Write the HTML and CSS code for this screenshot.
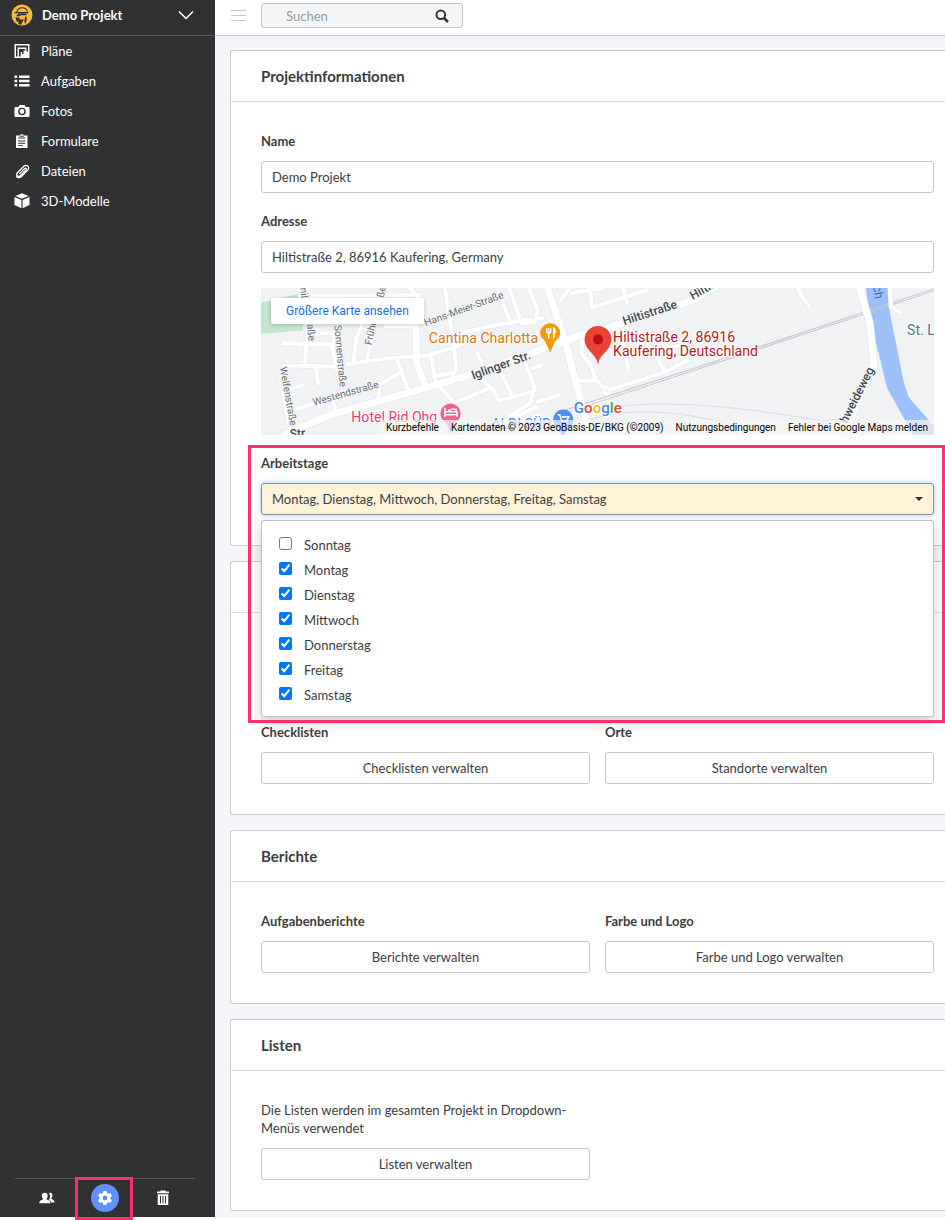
FILE: index.html
```html
<!DOCTYPE html>
<html lang="de">
<head>
<meta charset="utf-8">
<meta name="viewport" content="width=device-width, initial-scale=1">
<title>Demo Projekt – Einstellungen</title>
<link rel="stylesheet" href="styles.css">
</head>
<body>
<div class="app">
  <aside class="sidebar">
    <button class="project" type="button">
      <svg class="logo" viewBox="0 0 22 22" aria-hidden="true">
        <circle cx="11" cy="11" r="10.500" fill="#fbb93c"/>
        <path d="M5.800 8C6.500 5 8.500 3.800 11.400 3.800c3 0 4.600 1.800 5 4.200M3.500 8.600h13.800" fill="none" stroke="#303133" stroke-width="1.100"/>
        <path d="M7 9.500h8.500v1.800H9.500l-1 1H4.500L6.500 11zM4.500 13.500h4v2h4.500l-3 5.200-2.800-.7.5-2.500H5.500zM14.500 12l1.200 1.500v3l-1.600 3.500-.8-3z" fill="#303133"/>
      </svg>
      <span class="project-name">Demo Projekt</span>
      <svg class="chevron" viewBox="0 0 16 10" aria-hidden="true"><path d="M1 1.500l7 7 7-7" fill="none" stroke="#fff" stroke-width="1.500"/></svg>
    </button>
    <nav class="menu">
      <a href="#"><svg viewBox="0 0 16 16"><path fill-rule="evenodd" d="M0.500 1h15v14h-15zM2 2.500v11h1.500v-9h9v4h1.500v-6zM5 6v7.500h1.700V9H8v2h1.500V7.500h1.800V6z"/></svg>Pläne</a>
      <a href="#"><svg viewBox="0 0 16 16"><path d="M.5 2.500h2.700v2.400H.5zM5 2.500h10.500v2.400H5zM.5 6.800h2.700v2.400H.5zM5 6.800h10.500v2.400H5zM.5 11.100h2.700v2.400H.5zM5 11.100h10.500v2.400H5z"/></svg>Aufgaben</a>
      <a href="#"><svg viewBox="0 0 16 16"><path d="M5.500 2h5l1.200 2h2.800a1 1 0 0 1 1 1v8a1 1 0 0 1-1 1h-13a1 1 0 0 1-1-1V5a1 1 0 0 1 1-1h2.800z"/><circle cx="8" cy="8.500" r="3.100" fill="none" stroke="#303133" stroke-width="1.400"/></svg>Fotos</a>
      <a href="#"><svg viewBox="0 0 16 16"><path d="M2 2.500h3.500a2.500 2 0 0 1 4.600 0H13.500V15H2z"/><path d="M4.200 5h7M4.200 8h7M4.200 10.300h7M4.200 12.600h4.500M5.500 3.200h4.500" stroke="#303133"/></svg>Formulare</a>
      <a href="#"><svg viewBox="0 0 16 16"><path d="M5.300 10.900l5.300-5.300c1-1 2.300.4 1.400 1.400l-5.700 5.700c-2.200 2-4.900-.7-2.900-2.900l6.200-6.300c3.200-2.900 6.700.7 3.900 3.900L7.500 13.500c-2 1.800-4.500 1.400-5.300-.3" fill="none" stroke="#fff" stroke-width="1.300"/></svg>Dateien</a>
      <a href="#"><svg viewBox="0 0 16 16"><path d="M8 .3l6.600 2.600L8 5.700 1.400 2.900zM.5 4l6.900 3v8.300L.5 12zM15.500 4l-6.900 3v8.300l6.900-3.300z"/></svg>3D-Modelle</a>
    </nav>
    <div class="tools">
      <button type="button" aria-label="Benutzer"><svg viewBox="0 0 18 16"><path d="M11.200 2.500c2.500-1 4.300.8 3.900 3.200-.2 1.200-.7 1.700-1 2.200v1.200c1.500.9 3.100 1 3.400 3.900h-3.700c-.4-1.600-1.500-2-2.700-2.600 1.400-2 2-5 .1-7.900z"/><path d="M6.300 2c2.600 0 3.800 1.700 3.400 4.200-.2 1.100-.6 1.600-1 2.100v1.300c1.700.9 4 .9 4.200 4.400H.3c.2-3.500 2.300-3.500 4-4.400V8.300c-.4-.5-.8-1-1-2.100C2.900 3.700 3.900 2 6.300 2z"/></svg></button>
      <button type="button" class="active" aria-label="Einstellungen"><svg viewBox="0 0 16 16"><path fill-rule="evenodd" d="M6.500 1h3l.5 2 1.500.8 1.900-.6 1.500 2.600L13.400 7.200v1.600l1.500 1.400-1.500 2.600-1.900-.6-1.500.8-.5 2h-3l-.5-2-1.500-.8-1.900.6-1.500-2.600 1.500-1.400V7.200L1.100 5.800l1.500-2.600 1.900.6L6 3zM8 5.600a2.400 2.400 0 1 0 0 4.800 2.400 2.400 0 0 0 0-4.800z"/></svg></button>
      <button type="button" aria-label="Papierkorb"><svg viewBox="0 0 16 16"><path fill-rule="evenodd" d="M5.500 1.500V.5h5v1H14v1.800H2V1.500zM2.700 4.200h10.600V15H2.700zM5 6v7.500h1V6zm2.500 0v7.500h1V6zM10 6v7.500h1V6z"/></svg></button>
    </div>
  </aside>

  <div class="content">
    <header class="topbar">
      <button class="burger" type="button" aria-label="Menü"><svg viewBox="0 0 16 12"><path d="M0 .5h15M0 5.500h15M0 10.500h15" stroke="#c8c8c8"/></svg></button>
      <div class="search">
        <input type="search" placeholder="Suchen" aria-label="Suchen">
        <svg viewBox="0 0 14 14" aria-hidden="true"><circle cx="5.800" cy="5.800" r="4.300" fill="none" stroke="#333" stroke-width="2"/><path d="M9 9l4 4" stroke="#333" stroke-width="2.500"/></svg>
      </div>
    </header>

    <main class="cards">
      <section class="card">
        <h2>Projektinformationen</h2>
        <div class="card-body">
          <div class="field">
            <label for="name">Name</label>
            <input class="control" id="name" type="text" value="Demo Projekt">
          </div>
          <div class="field">
            <label for="address">Adresse</label>
            <input class="control" id="address" type="text" value="Hiltistraße 2, 86916 Kaufering, Germany">
            <div class="map">
              <svg class="map-canvas" viewBox="0 0 673 146" preserveAspectRatio="xMidYMid slice">
                <rect width="673" height="146" fill="#f0f2f4"/>
                <path d="M0 15L43 5l1 37L0 46z" fill="#c3e6cf"/>
                <path d="M603 0h22l2 25 14 70 5 14 27 31v6h-23l-26-47-17-70z" fill="#9dc0fa"/>
                <g fill="none" stroke="#c5c7ca"><path d="M302 122l142-46 163-54 66-22M302 125l142-47 163-54 66-22"/><path d="M319 127q65-26 240 5l34-4M325 132q50-18 130 0" stroke="#dadde0"/></g>
                <defs>
                  <g id="side-roads"><path d="M49 0l1 20-4 55M41 8l119-1M24 55l49 1M49 45h24M24 77l50 1 53-8 40-3 27-8 30-12M24 78l-2 17 9 45M77 35l-4 25 9 38M122 0l-14 70M103 36l-6 14-3 24M31 122l90-27 20-11M137 70l13 35M171 67l5 28M194 59l2 21-6 12M174 88l20-4M185 0l9 59M150 0l12 14M74 112l4 15M120 98l-2 16M177 95l17 19 37-15M217 65l10 20M57 79l2 16M31 101l13-5M125 38h32M180 51l27-8 54-11 21-2M249 0l12 35M238 4l13 32M269 2l8 20-3 12-12 1M219 89l14 12 6 11 35-10M240 82l11 24M262 67l12 32-5 16-20 12M277 113l22-7M272 80l9-3M311 5l31-5M329 0l2 20M362 0l4 15M332 19l54-17M321 52v13l10 14 3 11M316 92h20l10 10 56-18 24-12-6-15-28 5 12 22M362 55l5 25M536 0l3 8 7 9M627 0l1 19 9 5M190 114l9 31M246 132l30-14M300 12l9-12"/></g>
                  <g id="main-roads"><path d="M27 145l47-20 93-26 47-14 55-20 50-18 43-12 70-23 27-17M156 35l1 40 9 24M287 0l19 59 13 50 10 37M597 0l10 35 4 40-19 45-10 26"/></g>
                </defs>
                <g fill="none" stroke-linecap="round" stroke-linejoin="round">
                  <use href="#side-roads" stroke="#e1e4e7" stroke-width="5"/><use href="#main-roads" stroke="#e1e4e7" stroke-width="8"/>
                  <use href="#side-roads" stroke="#fff" stroke-width="4"/><use href="#main-roads" stroke="#fff" stroke-width="7"/>
                </g>
                <circle cx="346" cy="102" r="3" fill="#f0f2f4" stroke="#fff" stroke-width="2"/>
                <g class="street">
                  <text transform="translate(41 0) rotate(82)">nil</text>
                  <text transform="translate(48 36) rotate(85)">aße</text>
                  <text transform="translate(75 37) rotate(85)">Sonnenstraße</text>
                  <text transform="translate(112 57) rotate(-78)">Frühl</text>
                  <text transform="translate(124 10) rotate(-78)">ße</text>
                  <text transform="translate(21 79) rotate(80)">Welfenstraße</text>
                  <text transform="translate(55 117) rotate(-16)">Westendstraße</text>
                  <text transform="translate(166 38) rotate(-20)">Hans-Meier-Straße</text>
                </g>
                <g class="street main">
                  <text transform="translate(213 91) rotate(-20)">Iglinger Str.</text>
                  <text transform="translate(31 149) rotate(-4)">Str.</text>
                  <text transform="translate(363 37) rotate(-18)">Hiltistraße</text>
                  <text transform="translate(431 12) rotate(-30)">Hiltistraße</text>
                  <text transform="translate(584 135) rotate(-63)">hweideweg</text>
                </g>
                <text transform="translate(608 -14) rotate(80)" class="street river">Lech</text>
                <g class="place">
                  <text x="169" y="55" fill="#d9770f">Cantina Charlotta</text>
                  <text x="92" y="133" fill="#e83d77">Hotel Rid Ohg</text>
                  <text x="231" y="140" fill="#4285f4">ALDI SÜD</text>
                  <text x="644" y="47" fill="#547384">St. Le</text>
                  <text x="352" y="54" fill="#b3201d">Hiltistraße 2, 86916</text>
                  <text x="352" y="68" fill="#b3201d">Kaufering, Deutschland</text>
                </g>
                <path d="M289.500 64l-5-11c-3-3-5-5-5-8a10 10 0 0 1 20 0c0 3-2 5-5 8z" fill="#f29b05"/>
                <path d="M286 40v3q0 2 2 2t2-2v-3M288 40v10M293 50V40c2 1 2 4 0 6" fill="none" stroke="#fff" stroke-width="1.500"/>
                <path d="M337 75c-1-9-13-13-13-24a13 13 0 0 1 26 0c0 11-12 15-13 24z" fill="#ea4335" stroke="#c5352b" stroke-width=".5"/>
                <circle cx="337" cy="51" r="5" fill="#b31412"/>
                <path d="M190.500 144l-4-10a10 10 0 1 1 8 0z" fill="#f06292"/>
                <path d="M185 119v9M185 126h12v-3h-12M197 123v5M188 121.500h3M191 120.500h5v2" fill="none" stroke="#fff" stroke-width="1.500"/>
                <path d="M302 148l-5-9a10 10 0 1 1 11 0z" fill="#4e8df5"/>
                <path d="M297 126h2l2 6h5l2-4h-7" fill="none" stroke="#fff" stroke-width="1.500"/><circle cx="302" cy="135" r="1" fill="#fff"/><circle cx="306" cy="135" r="1" fill="#fff"/>
                <text x="313" y="124" class="google"><tspan fill="#4285f4">G</tspan><tspan fill="#ea4335">o</tspan><tspan fill="#fbbc05">o</tspan><tspan fill="#4285f4">g</tspan><tspan fill="#34a853">l</tspan><tspan fill="#ea4335">e</tspan></text>
              </svg>
              <a class="map-link" href="#">Größere Karte ansehen</a>
              <div class="map-legal"><button type="button">Kurzbefehle</button><span>Kartendaten © 2023 GeoBasis-DE/BKG (©2009)</span><a href="#">Nutzungsbedingungen</a><a href="#">Fehler bei Google Maps melden</a></div>
            </div>
          </div>
          <div class="field workdays">
            <label for="days">Arbeitstage</label>
            <button class="control picker" id="days" type="button" aria-expanded="true"><span>Montag, Dienstag, Mittwoch, Donnerstag, Freitag, Samstag</span><svg viewBox="0 0 8 4" aria-hidden="true"><path d="M0 0h8L4 4z"/></svg></button>
            <div class="options">
              <label><input type="checkbox">Sonntag</label>
              <label><input type="checkbox" checked>Montag</label>
              <label><input type="checkbox" checked>Dienstag</label>
              <label><input type="checkbox" checked>Mittwoch</label>
              <label><input type="checkbox" checked>Donnerstag</label>
              <label><input type="checkbox" checked>Freitag</label>
              <label><input type="checkbox" checked>Samstag</label>
            </div>
          </div>
        </div>
      </section>

      <section class="card">
        <h2>Aufgaben</h2>
        <div class="card-body columns">
          <div class="field wide"><h3>Aufgaben</h3><button class="control" type="button" aria-label="Aufgaben"></button></div>
          <div class="field"><h3>Checklisten</h3><button class="control" type="button">Checklisten verwalten</button></div>
          <div class="field"><h3>Orte</h3><button class="control" type="button">Standorte verwalten</button></div>
        </div>
      </section>

      <section class="card">
        <h2>Berichte</h2>
        <div class="card-body columns">
          <div class="field"><h3>Aufgabenberichte</h3><button class="control" type="button">Berichte verwalten</button></div>
          <div class="field"><h3>Farbe und Logo</h3><button class="control" type="button">Farbe und Logo verwalten</button></div>
        </div>
      </section>

      <section class="card">
        <h2>Listen</h2>
        <div class="card-body columns">
          <div class="field"><p>Die Listen werden im gesamten Projekt in Dropdown-Menüs verwendet</p><button class="control" type="button">Listen verwalten</button></div>
        </div>
      </section>
    </main>
  </div>
</div>
</body>
</html>
```

FILE: styles.css
```css
*, *::before, *::after { box-sizing: border-box; }

body {
  min-height: 100vh;
  margin: 0;
  background: #fff;
  color: #3c3c3e;
  font: 13px/18px Lato, "Open Sans", sans-serif;
  overflow-x: hidden;
}

button, input { font: inherit; color: inherit; }
button { cursor: pointer; }
a { color: inherit; text-decoration: none; }
h2, h3, p { margin: 0; }
svg { display: block; }

.app {
  display: grid;
  grid-template-columns: 215px minmax(0, 1fr);
}

/* Sidebar */
.sidebar {
  display: flex;
  flex-direction: column;
  background: #303133;
  color: #fff;
}

.project {
  display: flex;
  align-items: center;
  height: 36px;
  padding: 0 21px 5px 11px;
  border: 0;
  border-bottom: 1px solid #5a5b5d;
  background: none;
  text-align: left;
}

.logo { width: 22px; height: 22px; }
.project-name { flex: 1; margin-left: 9px; font-weight: 700; }
.chevron { width: 16px; height: 10px; }

.menu a {
  display: flex;
  align-items: center;
  gap: 11px;
  height: 30px;
  padding-left: 14px;
}

.menu svg { width: 16px; height: 16px; fill: #fff; }

.tools {
  display: grid;
  grid-template-columns: repeat(3, 58px);
  justify-content: center;
  justify-items: center;
  margin: auto 20px 0 15px;
  padding: 5px 0;
  border-top: 1px solid #58595b;
}

.tools button {
  position: relative;
  display: grid;
  place-items: center;
  width: 28px;
  height: 28px;
  padding: 0;
  border: 0;
  border-radius: 50%;
  background: none;
}

.tools svg { width: 16px; height: 16px; fill: #fff; }
.tools .active { background: #6090fa; }

.tools .active::after {
  content: "";
  position: absolute;
  z-index: 1;
  inset: -7px -14px -8px -16px;
  border: 3px solid #ff2f6c;
}

/* Top bar */
.content {
  min-width: 0;
  background: #f4f5f8;
}

.topbar {
  display: flex;
  align-items: center;
  gap: 14px;
  height: 36px;
  padding: 0 16px 4px;
  border-bottom: 1px solid #c9c9cb;
  background: #fff;
}

.burger { padding: 0; border: 0; background: none; }
.burger svg { width: 16px; height: 12px; }
.search { position: relative; width: 202px; }

.search input {
  display: block;
  width: 100%;
  height: 25px;
  padding: 0 40px 0 24px;
  border: 1px solid #c4c4c6;
  border-radius: 3px;
  background: #f4f5f7;
  outline: 0;
}

.search input::placeholder { color: #97989b; }
.search svg { position: absolute; top: 6px; right: 14px; width: 14px; height: 14px; }

/* Cards */
.cards {
  display: grid;
  gap: 15px;
  padding: 14px 0 6px 15px;
}

.card {
  min-width: 0;
  border: 1px solid #cacbd0;
  border-right: 0;
  border-radius: 3px 0 0 3px;
  background: #fff;
}

.card h2 {
  padding: 0 30px;
  border-bottom: 1px solid #dcdde0;
  font-size: 15px;
  line-height: 50px;
}

.card-body {
  display: grid;
  gap: 19px 15px;
  padding: 30px 11px 30px 30px;
}

.columns { grid-template-columns: repeat(2, minmax(0, 1fr)); }
.wide { grid-column: 1 / -1; }

.field { min-width: 0; }

.field > label,
.field h3 {
  display: block;
  margin-bottom: 10px;
  font-size: 13px;
  font-weight: 700;
  line-height: 19px;
}

.field p { margin-bottom: 11px; }

.control {
  display: block;
  width: 100%;
  height: 32px;
  padding: 0 10px;
  border: 1px solid #c6c7cb;
  border-radius: 3px;
  background: #fff;
  outline: 0;
}

/* Map */
.map {
  position: relative;
  height: 147px;
  margin-top: 15px;
  overflow: hidden;
  font-family: Roboto, sans-serif;
}

.map-canvas { width: 100%; height: 100%; }

.street {
  fill: #6b7075;
  stroke: #f5f6f7;
  stroke-width: 2px;
  paint-order: stroke;
  font-size: 10px;
}

.street.main { fill: #43484d; font-size: 12px; font-weight: 500; }
.street.river { fill: #3567b4; stroke: none; font-size: 12px; }

.place {
  stroke: #fff;
  stroke-width: 2px;
  paint-order: stroke;
  font-size: 14px;
}

.google {
  stroke: #fff;
  stroke-width: 2px;
  paint-order: stroke;
  font-size: 15px;
  font-weight: 500;
}

.map-link {
  position: absolute;
  top: 10px;
  left: 10px;
  padding: 0 15px;
  border-radius: 2px;
  background: #fff;
  box-shadow: 0 1px 4px rgb(0 0 0 / 20%);
  color: #1a6fe0;
  font-size: 12px;
  line-height: 26px;
}

.map-legal {
  position: absolute;
  right: 0;
  bottom: 0;
  display: flex;
  gap: 12px;
  padding: 0 6px;
  background: rgb(245 245 245 / 70%);
  color: #000;
  font-size: 10px;
  line-height: 15px;
  white-space: nowrap;
}

.map-legal button { padding: 0; border: 0; background: none; }

/* Workday picker */
.workdays { position: relative; }

.workdays::after {
  content: "";
  position: absolute;
  z-index: 3;
  top: -9px;
  right: -11px;
  left: -13px;
  height: 278px;
  border: 3px solid #ff2f6c;
  pointer-events: none;
}

.picker {
  display: flex;
  align-items: center;
  justify-content: space-between;
  border-color: #8a8b85;
  background: #fff4da;
  box-shadow: 0 0 6px #a9d3f5;
}

.picker svg { width: 8px; height: 4px; fill: #333; }

.options {
  position: absolute;
  z-index: 2;
  top: 66px;
  right: 0;
  left: 0;
  padding: 11px 17px 9px;
  border: 1px solid #c0c1c3;
  border-radius: 3px;
  background: #fff;
  box-shadow: 0 6px 12px rgb(0 0 0 / 18%);
}

.options label {
  display: flex;
  align-items: center;
  gap: 12px;
  height: 25px;
}

.options input {
  width: 13px;
  height: 13px;
  margin: 0 0 2px;
  accent-color: #0075ff;
}
```
